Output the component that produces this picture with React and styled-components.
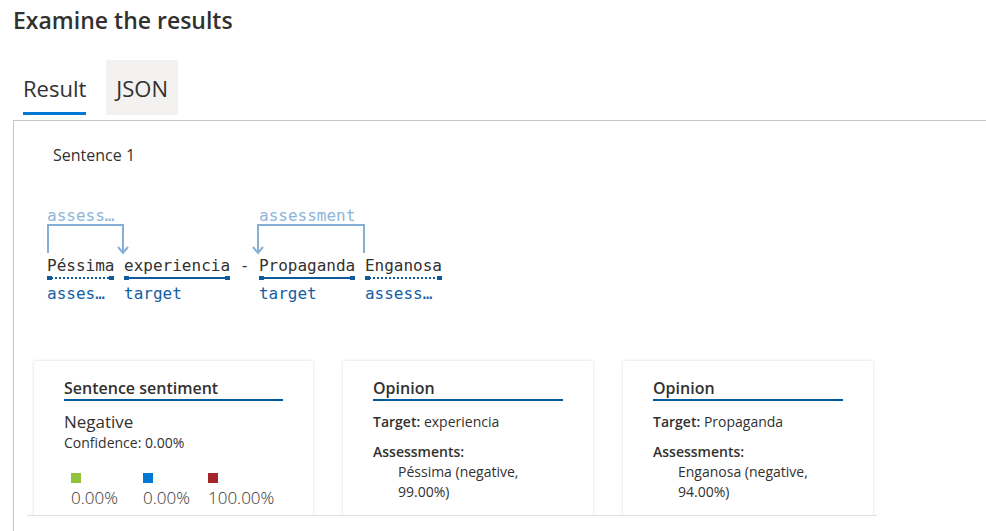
import styled, { createGlobalStyle } from 'styled-components';

const GlobalStyle = createGlobalStyle`
  html, body {
    margin: 0;
    padding: 0;
    background: #ffffff;
  }
  body {
    font-family: 'Open Sans', 'Noto Sans', sans-serif;
    color: #323130;
    overflow: hidden;
  }
`;

const Page = styled.div`
  width: 986px;
  height: 531px;
  padding-left: 13px;
  box-sizing: border-box;
  overflow: hidden;
`;

const Title = styled.h2`
  margin: 0;
  padding-top: 5px;
  height: 55px;
  font-size: 23px;
  font-weight: 600;
  line-height: 30px;
  color: #323130;
`;

const TabBar = styled.div`
  display: flex;
  gap: 10px;
  height: 55px;
`;

const Tab = styled.div`
  position: relative;
  display: flex;
  align-items: center;
  padding: 0 10px;
  font-size: 22px;
  color: #323130;
  background: ${(p) => (p.active ? 'transparent' : '#f3f2f1')};
  ${(p) =>
    p.active &&
    `
    &::after {
      content: '';
      position: absolute;
      left: 10px;
      right: 10px;
      bottom: 0;
      height: 3px;
      background: #0078d4;
    }
  `}
`;

const Panel = styled.div`
  margin-top: 5px;
  border-top: 1px solid #c8c6c4;
  border-left: 1px solid #c8c6c4;
  height: 420px;
  box-sizing: border-box;
`;

const SentenceLabel = styled.div`
  padding: 24px 0 0 39px;
  font-size: 16px;
  line-height: 20px;
`;

const Diagram = styled.div`
  display: flex;
  flex-direction: column;
  margin: 40px 0 0 33px;
  font-family: 'DejaVu Sans Mono', 'Liberation Mono', monospace;
  font-size: 16px;
`;

const Arcs = styled.svg`
  display: block;
  width: 420px;
  height: 52px;
  overflow: visible;
`;

const TokenRow = styled.div`
  display: flex;
  align-items: flex-start;
`;

const Gap = styled.span`
  white-space: pre;
  line-height: 18px;
  color: #323130;
`;

const Token = styled.div`
  display: flex;
  flex-direction: column;
  width: ${(p) => p.chars}ch;
`;

const Word = styled.span`
  line-height: 18px;
  color: #323130;
  white-space: pre;
`;

const Mark = styled.div`
  position: relative;
  height: 4px;
  margin-top: 1px;
  &::before {
    content: '';
    position: absolute;
    left: 0;
    right: 0;
    top: 1px;
    height: 2px;
    background: ${(p) =>
      p.dotted
        ? 'repeating-linear-gradient(90deg, #0f5a9c 0 2px, transparent 2px 4px)'
        : '#0f5a9c'};
  }
  &::after {
    content: '';
    position: absolute;
    inset: 0;
    background: linear-gradient(#0f5a9c, #0f5a9c) left / 5px 4px no-repeat,
      linear-gradient(#0f5a9c, #0f5a9c) right / 5px 4px no-repeat;
  }
`;

const Tag = styled.span`
  margin-top: 5px;
  line-height: 18px;
  color: #135ea5;
  white-space: pre;
`;

const CardStrip = styled.div`
  display: inline-flex;
  gap: 30px;
  margin: 51px 0 0 13px;
  padding: 7px 4px 0 7px;
  height: 154px;
  overflow: hidden;
  border-bottom: 1px solid #e1dfdd;
`;

const Card = styled.div`
  width: ${(p) => p.w}px;
  height: 200px;
  flex-shrink: 0;
  box-sizing: border-box;
  padding: 17px 30px 0;
  background: #fff;
  box-shadow: 0 0 3px rgba(0, 0, 0, 0.12), 0 0 1px rgba(0, 0, 0, 0.08);
`;

const CardHeader = styled.div`
  font-size: 16px;
  font-weight: 600;
  line-height: 20px;
  padding-bottom: 1px;
  border-bottom: 2px solid #005a9e;
  color: #323130;
`;

const Big = styled.div`
  margin-top: 10px;
  font-size: 17px;
  line-height: 22px;
`;

const Small = styled.div`
  margin-top: 1px;
  font-size: 14px;
  line-height: 18px;
`;

const Scores = styled.div`
  display: grid;
  grid-template-columns: 72px 65px auto;
  margin: 21px 0 0 7px;
`;

const Score = styled.div`
  display: flex;
  flex-direction: column;
  gap: 4px;
  font-size: 17px;
  font-weight: 300;
  line-height: 22px;
  &::before {
    content: '';
    width: 10px;
    height: 10px;
    background: ${(p) => p.color};
  }
`;

const Field = styled.div`
  margin-top: ${(p) => p.top}px;
  font-size: 14px;
  line-height: 20px;
  b {
    font-weight: 600;
  }
`;

const Indented = styled.div`
  padding-left: 25px;
  max-width: 150px;
  font-size: 14px;
  line-height: 20px;
`;

const tokens = [
  { word: 'Péssima', tag: 'asses…', dotted: true },
  { gap: ' ' },
  { word: 'experiencia', tag: 'target' },
  { gap: ' - ' },
  { word: 'Propaganda', tag: 'target' },
  { gap: ' ' },
  { word: 'Enganosa', tag: 'assess…', dotted: true },
];

const arcColor = '#86afd6';

const Arrow = ({ x }) => (
  <polyline points={`${x - 5},42 ${x},48 ${x + 5},42`} fill="none" stroke={arcColor} strokeWidth="2" />
);

const opinions = [
  { target: 'experiencia', assessment: 'Péssima (negative, 99.00%)' },
  { target: 'Propaganda', assessment: 'Enganosa (negative, 94.00%)' },
];

export default function App() {
  return (
    <Page>
      <GlobalStyle />
      <Title>Examine the results</Title>
      <TabBar>
        <Tab active>Result</Tab>
        <Tab>JSON</Tab>
      </TabBar>
      <Panel>
        <SentenceLabel>Sentence 1</SentenceLabel>
        <Diagram>
          <Arcs viewBox="0 0 420 52">
            <text x="0" y="16" fill="#8db5da" fontSize="16" fontFamily="DejaVu Sans Mono, monospace">assess…</text>
            <path d="M1 48 V20 H76 V48" fill="none" stroke={arcColor} strokeWidth="2" />
            <Arrow x={76} />
            <text x="212" y="16" fill="#8db5da" fontSize="16" fontFamily="DejaVu Sans Mono, monospace">assessment</text>
            <path d="M317 48 V20 H211 V48" fill="none" stroke={arcColor} strokeWidth="2" />
            <Arrow x={211} />
          </Arcs>
          <TokenRow>
            {tokens.map((t, i) =>
              t.gap ? (
                <Gap key={i}>{t.gap}</Gap>
              ) : (
                <Token key={i} chars={t.word.length}>
                  <Word>{t.word}</Word>
                  <Mark dotted={t.dotted} />
                  <Tag>{t.tag}</Tag>
                </Token>
              )
            )}
          </TokenRow>
        </Diagram>
        <CardStrip>
          <Card w={279}>
            <CardHeader>Sentence sentiment</CardHeader>
            <Big>Negative</Big>
            <Small>Confidence: 0.00%</Small>
            <Scores>
              <Score color="#92c13d">0.00%</Score>
              <Score color="#0078d4">0.00%</Score>
              <Score color="#a4262c">100.00%</Score>
            </Scores>
          </Card>
          {opinions.map((o) => (
            <Card w={250} key={o.target}>
              <CardHeader>Opinion</CardHeader>
              <Field top={11}>
                <b>Target:</b> {o.target}
              </Field>
              <Field top={10}>
                <b>Assessments:</b>
              </Field>
              <Indented>{o.assessment}</Indented>
            </Card>
          ))}
        </CardStrip>
      </Panel>
    </Page>
  );
}
